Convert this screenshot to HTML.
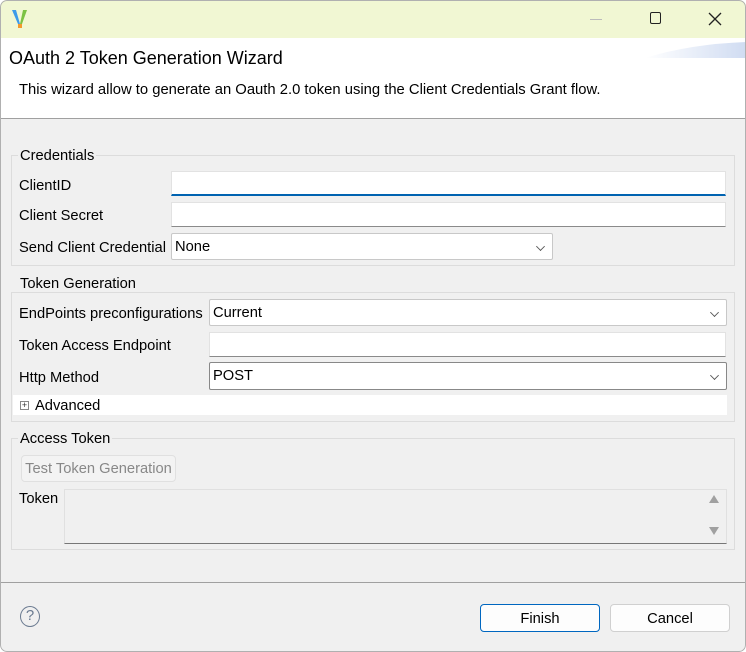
<!DOCTYPE html>
<html><head><style>
*{box-sizing:border-box;margin:0;padding:0}
body{width:746px;height:652px;overflow:hidden;background:#fff;font-family:"Liberation Sans",sans-serif;font-size:14.7px;color:#000;position:relative}
.a{position:absolute}
.t{margin-top:2px}
.win{position:absolute;left:0;top:0;width:746px;height:652px;border-radius:7px;overflow:hidden;background:#f0f0f0}
.frame{position:absolute;left:0;top:0;width:746px;height:652px;border:1px solid #b0b0b0;border-radius:7px;pointer-events:none}
.tb{left:0;top:0;width:746px;height:38px;background:#f1f7d3}
.hdr{left:0;top:38px;width:746px;height:81px;background:#fff;border-bottom:1px solid #a0a0a0}
.grp{border:1px solid #dcdcdc}
.leg{background:#f0f0f0;padding:0 2px}
.inp{background:#fff;border:1px solid #e2e2e2;border-bottom:1px solid #8a8a8a}
.sel{background:#fff;border:1px solid #c8c8c8;border-radius:2px;padding-left:3px;line-height:26px}
.chev{position:absolute;right:8px;top:9px;width:7px;height:7px;border-right:1px solid #555;border-bottom:1px solid #555;transform:rotate(45deg) scale(.9)}
.btn{background:#fdfdfd;border:1px solid #d0d0d0;border-radius:4px;text-align:center;line-height:28px}
</style></head><body>
<div class="win">
<div class="a tb"></div>
<svg class="a" style="left:10px;top:8px" width="20" height="22" viewBox="0 0 20 22"><path d="M2 2 L8 16 L10 16 L6 2Z" fill="#3d9be9"/><path d="M17 2 L12 16 L10 16 L13 2Z" fill="#7cc243"/><rect x="8" y="16" width="4" height="4" fill="#f39a2c"/></svg>
<div class="a" style="left:590px;top:19px;width:12px;height:1px;background:#bbb"></div>
<div class="a" style="left:650px;top:12px;width:11px;height:12px;border:1.5px solid #222;border-radius:2px"></div>
<svg class="a" style="left:708px;top:12px" width="14" height="14"><path d="M1 1L13 13M13 1L1 13" stroke="#222" stroke-width="1.3"/></svg>
<div class="a hdr"></div>
<svg class="a" style="left:600px;top:38px" width="146" height="22"><defs><linearGradient id="g" x1="0" x2="1"><stop offset="0" stop-color="#fff"/><stop offset="1" stop-color="#d0dcf2"/></linearGradient></defs><path d="M45 20 Q90 6 146 4 L146 20Z" fill="url(#g)"/></svg>
<div class="a" style="left:9px;top:48px;font-size:18px">OAuth 2 Token Generation Wizard</div>
<div class="a" style="left:19px;top:82px;font-size:14.8px">This wizard allow to generate an Oauth 2.0 token using the Client Credentials Grant flow.</div>

<div class="a grp" style="left:11px;top:155px;width:724px;height:111px"></div>
<div class="a leg" style="left:18px;top:148px">Credentials</div>
<div class="a" style="left:19px;top:178px">ClientID</div>
<div class="a inp" style="left:171px;top:171px;width:555px;height:25px;border-bottom:2px solid #0063b1"></div>
<div class="a" style="left:19px;top:208px">Client Secret</div>
<div class="a inp" style="left:171px;top:202px;width:555px;height:25px"></div>
<div class="a" style="left:19px;top:240px">Send Client Credential</div>
<div class="a sel" style="left:171px;top:233px;width:382px;height:27px">None<span class="chev"></span></div>

<div class="a grp" style="left:11px;top:292px;width:724px;height:130px"></div>
<div class="a leg" style="left:18px;top:276px">Token Generation</div>
<div class="a" style="left:19px;top:306px">EndPoints preconfigurations</div>
<div class="a sel" style="left:209px;top:299px;width:518px;height:27px">Current<span class="chev"></span></div>
<div class="a" style="left:19px;top:338px">Token Access Endpoint</div>
<div class="a inp" style="left:209px;top:332px;width:517px;height:25px"></div>
<div class="a" style="left:19px;top:370px">Http Method</div>
<div class="a sel" style="left:209px;top:362px;width:518px;height:28px;border-color:#888">POST<span class="chev"></span></div>
<div class="a" style="left:13px;top:395px;width:714px;height:20px;background:#fff"></div>
<div class="a" style="left:20px;top:401px;width:9px;height:9px;border:1px solid #888;font-size:9px;line-height:7px;text-align:center;color:#333">+</div>
<div class="a" style="left:35px;top:398px">Advanced</div>

<div class="a grp" style="left:11px;top:438px;width:724px;height:112px"></div>
<div class="a leg" style="left:18px;top:431px">Access Token</div>
<div class="a btn" style="left:21px;top:455px;width:155px;height:27px;line-height:26px;color:#888;background:#f3f3f3;border-color:#e0e0e0">Test Token Generation</div>
<div class="a" style="left:19px;top:491px">Token</div>
<div class="a" style="left:64px;top:489px;width:663px;height:55px;border:1px solid #e0e0e0;border-bottom:1px solid #777;background:#f0f0f0"></div>
<div class="a" style="left:709px;top:495px;width:0;height:0;border-left:5px solid transparent;border-right:5px solid transparent;border-bottom:8px solid #a0a0a0"></div>
<div class="a" style="left:709px;top:527px;width:0;height:0;border-left:5px solid transparent;border-right:5px solid transparent;border-top:8px solid #a0a0a0"></div>

<div class="a" style="left:0;top:582px;width:746px;height:1px;background:#a0a0a0"></div>
<div class="a" style="left:20px;top:606px;width:20px;height:21px;border:1.5px solid #6a7a90;border-radius:50%;text-align:center;line-height:18px;font-size:15px;color:#6a7a90">?</div>
<div class="a btn" style="left:480px;top:604px;width:120px;height:28px;border-color:#0067c0">Finish</div>
<div class="a btn" style="left:610px;top:604px;width:120px;height:28px">Cancel</div>
<div class="frame"></div>
</div>
</body></html>
